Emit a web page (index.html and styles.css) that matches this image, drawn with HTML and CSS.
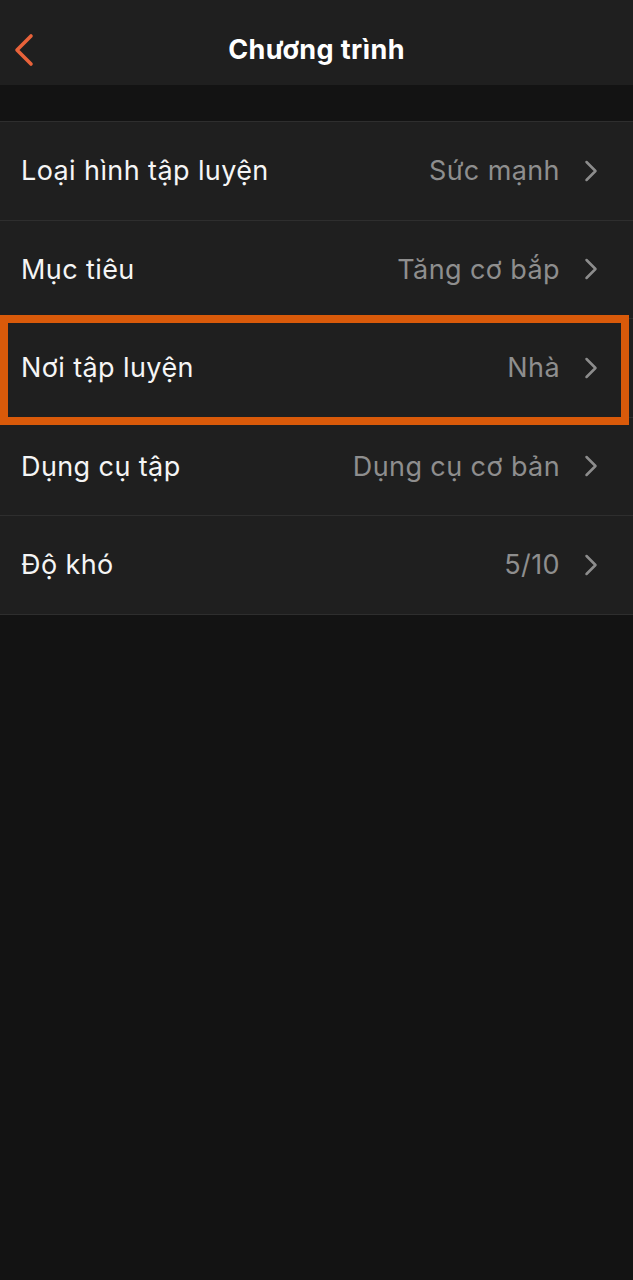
FILE: index.html
```html
<!DOCTYPE html>
<html lang="vi">
<head>
    <meta charset="UTF-8">
    <meta name="viewport" content="width=device-width, initial-scale=1.0">
    <title>Chương trình</title>
    <link rel="stylesheet" href="styles.css">
</head>
<body>

    <header class="topbar">
        <button class="back" aria-label="Quay lại">
            <svg width="24" height="34" viewBox="0 0 24 34">
                <path d="M19 3 L5 17 L19 31" fill="none" stroke="#e8623a" stroke-width="3.6" stroke-linecap="round" stroke-linejoin="round"/>
            </svg>
        </button>
        <h1>Chương trình</h1>
    </header>

    <div class="spacer"></div>

    <ul class="settings">
        <li class="row">
            <span class="label">Loại hình tập luyện</span>
            <span class="value">Sức mạnh</span>
            <svg class="chev" width="16" height="24" viewBox="0 0 16 24"><path d="M3.5 3 L12.5 12 L3.5 21" fill="none" stroke="#8c8c8c" stroke-width="2.5" stroke-linecap="round" stroke-linejoin="round"/></svg>
        </li>
        <li class="row">
            <span class="label">Mục tiêu</span>
            <span class="value">Tăng cơ bắp</span>
            <svg class="chev" width="16" height="24" viewBox="0 0 16 24"><path d="M3.5 3 L12.5 12 L3.5 21" fill="none" stroke="#8c8c8c" stroke-width="2.5" stroke-linecap="round" stroke-linejoin="round"/></svg>
        </li>
        <li class="row active">
            <span class="label">Nơi tập luyện</span>
            <span class="value">Nhà</span>
            <svg class="chev" width="16" height="24" viewBox="0 0 16 24"><path d="M3.5 3 L12.5 12 L3.5 21" fill="none" stroke="#8c8c8c" stroke-width="2.5" stroke-linecap="round" stroke-linejoin="round"/></svg>
        </li>
        <li class="row">
            <span class="label">Dụng cụ tập</span>
            <span class="value">Dụng cụ cơ bản</span>
            <svg class="chev" width="16" height="24" viewBox="0 0 16 24"><path d="M3.5 3 L12.5 12 L3.5 21" fill="none" stroke="#8c8c8c" stroke-width="2.5" stroke-linecap="round" stroke-linejoin="round"/></svg>
        </li>
        <li class="row">
            <span class="label">Độ khó</span>
            <span class="value">5/10</span>
            <svg class="chev" width="16" height="24" viewBox="0 0 16 24"><path d="M3.5 3 L12.5 12 L3.5 21" fill="none" stroke="#8c8c8c" stroke-width="2.5" stroke-linecap="round" stroke-linejoin="round"/></svg>
        </li>
    </ul>

</body>
</html>
```

FILE: styles.css
```css
* {
    margin: 0;
    padding: 0;
    box-sizing: border-box;
}

body {
    font-family: Inter, "Noto Sans", sans-serif;
    background: #131313;
    color: #ffffff;
    width: 633px;
    min-height: 1280px;
}

.topbar {
    height: 85px;
    padding-top: 14px;
    background: #1f1f1f;
    display: flex;
    align-items: center;
    justify-content: center;
    position: relative;
}

.topbar h1 {
    font-size: 27px;
    font-weight: 700;
    letter-spacing: 0.4px;
}

.back {
    position: absolute;
    left: 12px;
    top: 33px;
    background: none;
    border: none;
    display: flex;
}

.spacer {
    height: 36px;
}

.settings {
    list-style: none;
    background: #1f1f1f;
    border-top: 1px solid #2e2e2e;
}

.row {
    height: 98.5px;
    display: flex;
    align-items: center;
    padding: 0 34px 0 21px;
    border-bottom: 1px solid #2e2e2e;
    position: relative;
}

.label {
    flex: 1;
    font-size: 27px;
    letter-spacing: 0.4px;
    color: #f5f5f5;
}

.value {
    font-size: 27px;
    letter-spacing: 0.4px;
    color: #8e8e8e;
    margin-right: 23px;
}

.chev {
    display: block;
}

/* recuadro naranja de la fila seleccionada */
.row.active::after {
    content: "";
    position: absolute;
    left: 0;
    right: 4px;
    top: -4px;
    bottom: -8px;
    border: 8px solid #d95a0a;
    pointer-events: none;
}
```
